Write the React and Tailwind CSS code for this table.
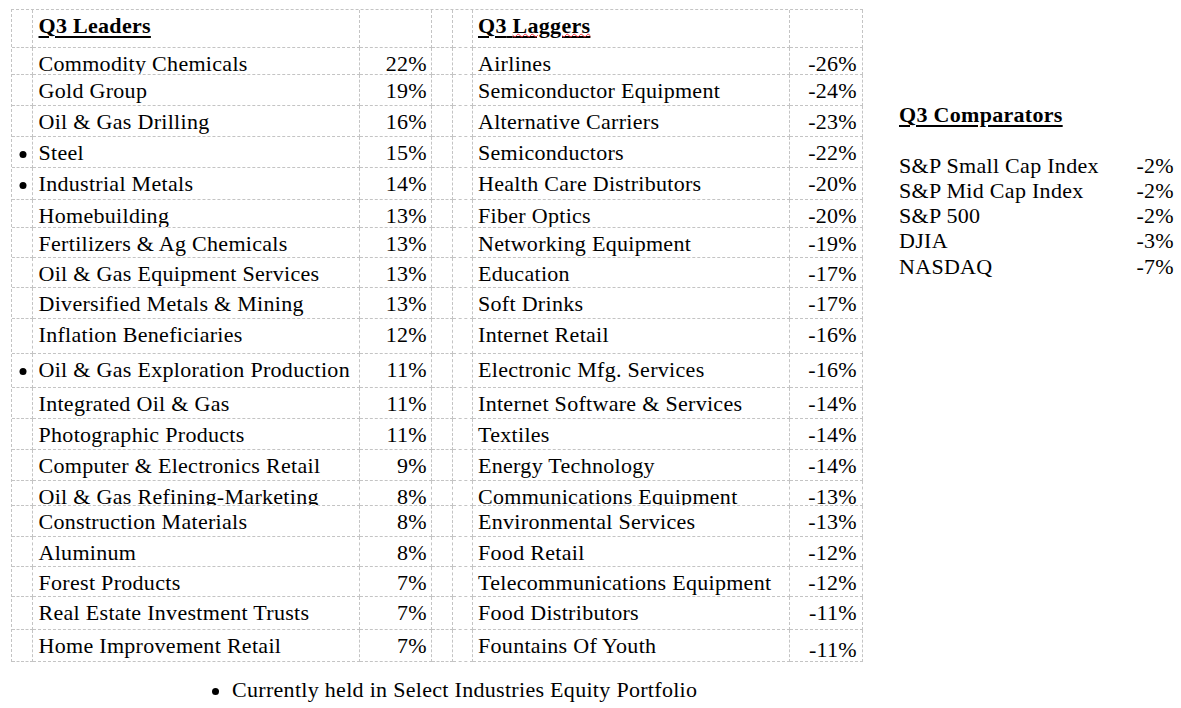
const LEADERS = [
  [false, 'Commodity Chemicals', '22%'],
  [false, 'Gold Group', '19%'],
  [false, 'Oil & Gas Drilling', '16%'],
  [true, 'Steel', '15%'],
  [true, 'Industrial Metals', '14%'],
  [false, 'Homebuilding', '13%'],
  [false, 'Fertilizers & Ag Chemicals', '13%'],
  [false, 'Oil & Gas Equipment Services', '13%'],
  [false, 'Diversified Metals & Mining', '13%'],
  [false, 'Inflation Beneficiaries', '12%'],
  [true, 'Oil & Gas Exploration Production', '11%'],
  [false, 'Integrated Oil & Gas', '11%'],
  [false, 'Photographic Products', '11%'],
  [false, 'Computer & Electronics Retail', '9%'],
  [false, 'Oil & Gas Refining-Marketing', '8%'],
  [false, 'Construction Materials', '8%'],
  [false, 'Aluminum', '8%'],
  [false, 'Forest Products', '7%'],
  [false, 'Real Estate Investment Trusts', '7%'],
  [false, 'Home Improvement Retail', '7%'],
]

const LAGGERS = [
  ['Airlines', '-26%'],
  ['Semiconductor Equipment', '-24%'],
  ['Alternative Carriers', '-23%'],
  ['Semiconductors', '-22%'],
  ['Health Care Distributors', '-20%'],
  ['Fiber Optics', '-20%'],
  ['Networking Equipment', '-19%'],
  ['Education', '-17%'],
  ['Soft Drinks', '-17%'],
  ['Internet Retail', '-16%'],
  ['Electronic Mfg. Services', '-16%'],
  ['Internet Software & Services', '-14%'],
  ['Textiles', '-14%'],
  ['Energy Technology', '-14%'],
  ['Communications Equipment', '-13%'],
  ['Environmental Services', '-13%'],
  ['Food Retail', '-12%'],
  ['Telecommunications Equipment', '-12%'],
  ['Food Distributors', '-11%'],
  ['Fountains Of Youth', '-11%'],
]

// row heights in px, border included (Word exact-height rows)
const ROW_H = [
  'h-[27px]', 'h-[31px]', 'h-[31px]', 'h-[31px]', 'h-[32px]',
  'h-[28px]', 'h-[30px]', 'h-[30px]', 'h-[31px]', 'h-[35px]',
  'h-[34px]', 'h-[31px]', 'h-[31px]', 'h-[31px]', 'h-[25px]',
  'h-[31px]', 'h-[30px]', 'h-[30px]', 'h-[33px]', 'h-[32px]',
]

const COMPARATORS = [
  ['S&P Small Cap Index', '-2%'],
  ['S&P Mid Cap Index', '-2%'],
  ['S&P 500', '-2%'],
  ['DJIA', '-3%'],
  ['NASDAQ', '-7%'],
]

const cell = 'border-r border-b border-dashed border-[#c4c4c4] overflow-hidden pt-[4px] leading-[24px] whitespace-nowrap'

function Row({ height, children }) {
  return <div className={`flex ${height}`}>{children}</div>
}

function Dot({ className = '' }) {
  return <div className={`size-[7px] rounded-full bg-black ${className}`} />
}

export default function App() {
  return (
    <div className="w-[1181px] h-[708px] bg-white text-black font-['Liberation_Serif',serif] text-[22px] tracking-[0.3px] overflow-hidden">
      <div className="flex">
        <div className="ml-[11px] mt-[9px]">
          <div className="border-l border-t border-dashed border-[#c4c4c4] w-[852px]">
            <Row height="h-[38px]">
              <div className={`${cell} w-[21px]`} />
              <div className={`${cell} w-[327px] pl-[5.5px] font-bold`}>
                <span className="underline decoration-2 underline-offset-[3px]">Q3 Leaders</span>
              </div>
              <div className={`${cell} w-[72px]`} />
              <div className={`${cell} w-[21px]`} />
              <div className={`${cell} w-[20px]`} />
              <div className={`${cell} w-[317px] pl-[5px] font-bold`}>
                <span className="underline decoration-2 underline-offset-[3px]">
                  Q3{' '}
                  <span className="underline decoration-wavy decoration-red-500 decoration-1 underline-offset-[0px]">Laggers</span>
                </span>
              </div>
              <div className={`${cell} w-[73px]`} />
            </Row>
            {LEADERS.map(([held, name, pct], i) => {
              const [lagName, lagPct] = LAGGERS[i]
              const last = i === LEADERS.length - 1
              return (
                <Row key={name} height={ROW_H[i]}>
                  <div className={`${cell} w-[21px]`}>
                    {held && <Dot className="mx-auto mt-[10px] translate-x-[0.5px]" />}
                  </div>
                  <div className={`${cell} w-[327px] pl-[5.5px]`}>{name}</div>
                  <div className={`${cell} w-[72px] text-right pr-[4px]`}>{pct}</div>
                  <div className={`${cell} w-[21px]`} />
                  <div className={`${cell} w-[20px]`} />
                  <div className={`${cell} w-[317px] pl-[5px]`}>{lagName}</div>
                  <div className={`${cell} w-[73px] text-right pr-[5px] ${last ? 'pt-[8px]' : ''}`}>{lagPct}</div>
                </Row>
              )
            })}
          </div>
          <div className="mt-[16px] pl-[201px] leading-[24px] flex items-start">
            <Dot className="mt-[10px] mr-[13px]" />
            <span>Currently held in Select Industries Equity Portfolio</span>
          </div>
        </div>

        <div className="ml-[36px] pt-[102px] w-[275px] leading-[25.3px]">
          <p className="font-bold">
            <span className="underline decoration-2 underline-offset-[3px]">Q3 Comparators</span>
          </p>
          <div className="h-[25.3px]" />
          {COMPARATORS.map(([name, pct]) => (
            <div key={name} className="flex justify-between">
              <span>{name}</span>
              <span>{pct}</span>
            </div>
          ))}
        </div>
      </div>
    </div>
  )
}
